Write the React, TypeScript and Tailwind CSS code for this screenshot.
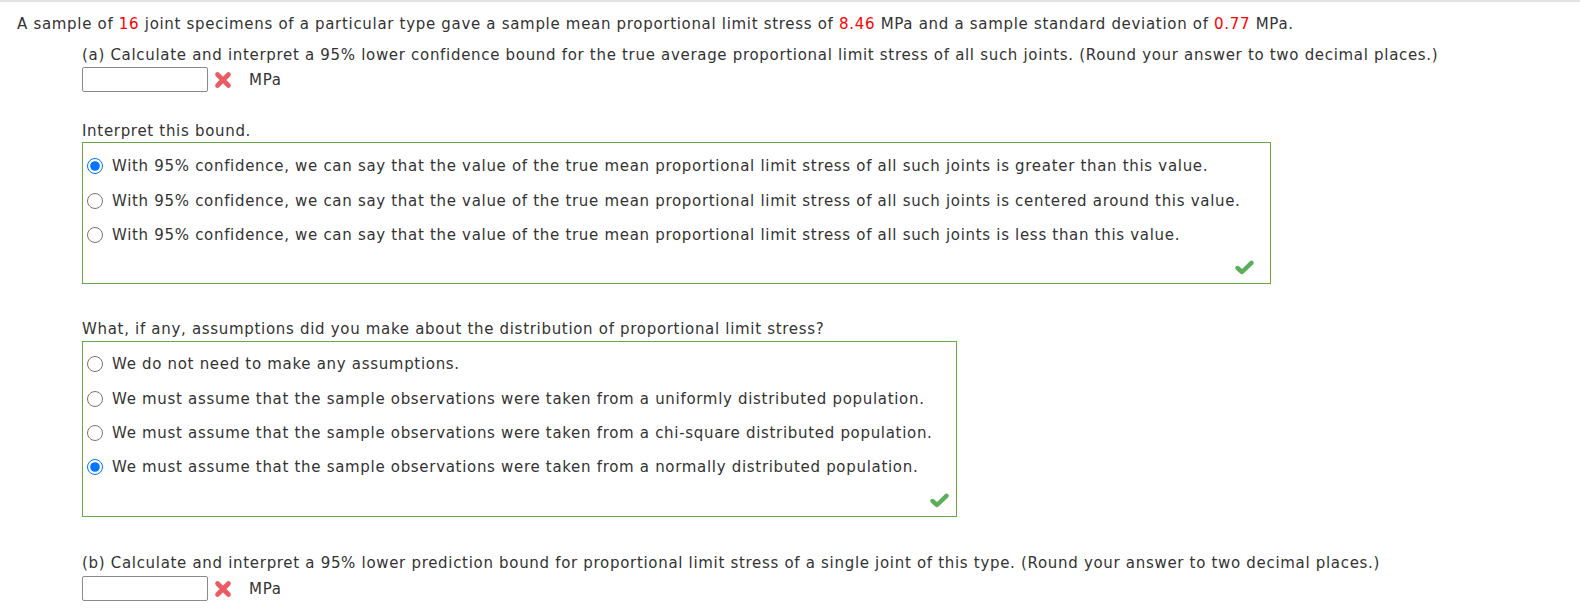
import React from "react";

const Cross = () => (
  <svg width="18" height="18" viewBox="0 0 18 18" className="shrink-0">
    <path d="M3.5 3.5 L14.5 14.5 M14.5 3.5 L3.5 14.5" stroke="#ec5b63" strokeWidth="4.6" strokeLinecap="round" />
  </svg>
);

const Check = () => (
  <svg width="19" height="15" viewBox="0 0 19 15">
    <path d="M2.5 8 L7 12 L16.5 2.8" fill="none" stroke="#5cae5c" strokeWidth="4.4" strokeLinecap="round" strokeLinejoin="round" />
  </svg>
);

const Red = ({ children }: { children: React.ReactNode }) => (
  <span className="text-[#ff0000]">{children}</span>
);

const AnswerInput = () => (
  <div className="flex items-center h-[25px]">
    <div className="w-[126px] h-[25px] border border-[#8a8a8a] rounded-[2px] bg-white" />
    <div className="ml-[6px]">
      <Cross />
    </div>
    <span className="ml-[17px]">MPa</span>
  </div>
);

const Radio = ({ checked, text, name }: { checked?: boolean; text: string; name: string }) => (
  <div className="flex items-center h-[34.4px]">
    <input
      type="radio"
      name={name}
      defaultChecked={checked}
      className="ml-[4px] mr-[8px] w-[16px] h-[16px] m-0 shrink-0"
    />
    <span className="ml-[1px]">{text}</span>
  </div>
);

export default function App() {
  const q1 = [
    "With 95% confidence, we can say that the value of the true mean proportional limit stress of all such joints is greater than this value.",
    "With 95% confidence, we can say that the value of the true mean proportional limit stress of all such joints is centered around this value.",
    "With 95% confidence, we can say that the value of the true mean proportional limit stress of all such joints is less than this value.",
  ];
  const q2 = [
    "We do not need to make any assumptions.",
    "We must assume that the sample observations were taken from a uniformly distributed population.",
    "We must assume that the sample observations were taken from a chi-square distributed population.",
    "We must assume that the sample observations were taken from a normally distributed population.",
  ];
  return (
    <div
      className="w-[1580px] h-[611px] bg-white text-[#333333] text-[15px] leading-[20px] tracking-[0.69px] overflow-hidden"
      style={{ fontFamily: '"DejaVu Sans", Verdana, sans-serif' }}
    >
      <div className="h-[2px] bg-[#e3e3e3]" />
      <div className="pl-[17px] pt-[12px]">
        A sample of <Red>16</Red> joint specimens of a particular type gave a sample mean proportional limit
        stress of <Red>8.46</Red> MPa and a sample standard deviation of <Red>0.77</Red> MPa.
      </div>
      <div className="pl-[82px]">
        <div className="mt-[11px]">
          (a) Calculate and interpret a 95% lower confidence bound for the true average proportional limit stress of
          all such joints. (Round your answer to two decimal places.)
        </div>
        <div className="mt-[2px]">
          <AnswerInput />
        </div>
        <div className="mt-[29px]">Interpret this bound.</div>
        <div className="mt-[1px] w-[1189px] h-[142px] border border-[#6aa842] pt-[6px] flex flex-col">
          {q1.map((t, i) => (
            <Radio key={i} name="q1" checked={i === 0} text={t} />
          ))}
          <div className="flex-1 flex items-center justify-end pr-[16px]">
            <Check />
          </div>
        </div>
        <div className="mt-[35px]">What, if any, assumptions did you make about the distribution of proportional limit stress?</div>
        <div className="mt-[2px] w-[875px] h-[176px] border border-[#6aa842] pt-[5px] flex flex-col">
          {q2.map((t, i) => (
            <Radio key={i} name="q2" checked={i === 3} text={t} />
          ))}
          <div className="flex-1 flex items-center justify-end pr-[7px]">
            <Check />
          </div>
        </div>
        <div className="mt-[36px]">
          (b) Calculate and interpret a 95% lower prediction bound for proportional limit stress of a single joint of
          this type. (Round your answer to two decimal places.)
        </div>
        <div className="mt-[3px]">
          <AnswerInput />
        </div>
      </div>
    </div>
  );
}
